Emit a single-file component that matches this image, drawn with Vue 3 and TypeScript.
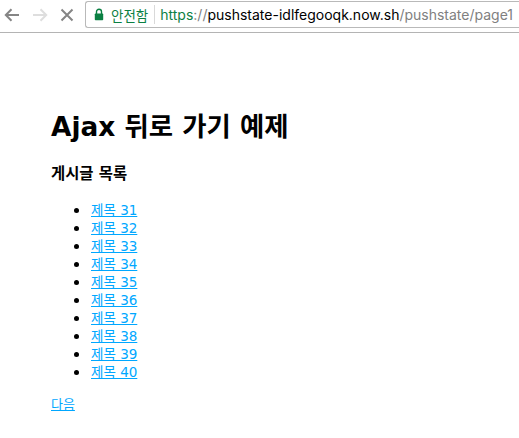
<script setup lang="ts">
const items: number[] = [31, 32, 33, 34, 35, 36, 37, 38, 39, 40]
</script>

<template>
  <div class="page">
    <header class="toolbar">
      <svg class="nav back" width="18" height="16" viewBox="0 0 18 16"><path d="M16 8H3M8.500 2.200 2.800 8l5.700 5.800" fill="none" stroke="#858585" stroke-width="2"/></svg>
      <svg class="nav forward" width="18" height="16" viewBox="0 0 18 16"><path d="M2 8h13M9.500 2.200 15.200 8l-5.700 5.800" fill="none" stroke="#dedede" stroke-width="2"/></svg>
      <svg class="nav stop" width="14" height="14" viewBox="0 0 14 14"><path d="M1.500 1.500l11 11M12.500 1.500l-11 11" fill="none" stroke="#858585" stroke-width="2"/></svg>
      <div class="omnibox">
        <svg class="lock" width="10" height="13" viewBox="0 0 10 13"><path d="M2.500 6V3.800a2.500 2.500 0 0 1 5 0V6" fill="none" stroke="#0b8043" stroke-width="1.400"/><rect x="0.800" y="5.400" width="8.400" height="6.800" rx="0.800" fill="#0b8043"/></svg>
        <span class="secure">안전함</span>
        <span class="divider"></span>
        <span class="url"><span class="scheme">https</span><span class="slashes">://</span><span class="host">pushstate-idlfegooqk.now.sh</span><span class="path">/pushstate/page1</span></span>
      </div>
    </header>
    <main class="content">
      <h1>Ajax 뒤로 가기 예제</h1>
      <h4>게시글 목록</h4>
      <ul>
        <li v-for="n in items" :key="n"><a href="#">제목 {{ n }}</a></li>
      </ul>
      <a class="next" href="#">다음</a>
    </main>
  </div>
</template>

<style>
html, body { margin: 0; background: #fff; }
</style>

<style scoped>
.page { width: 519px; height: 438px; overflow: hidden; background: #fff; font-family: "DejaVu Sans", "Noto Sans CJK KR", sans-serif; }
.toolbar { height: 33px; box-sizing: border-box; border-bottom: 1px solid #b4b4b4; background: #fff; display: flex; align-items: center; padding: 1px 0 4px 3px; }
.nav { flex: none; }
.forward { margin-left: 10px; }
.stop { margin-left: 11px; }
.omnibox { margin-left: 11px; flex: 1; height: 27px; box-sizing: border-box; border: 1px solid #b9b9b9; border-right: 0; border-radius: 3px 0 0 3px; display: flex; align-items: center; padding-left: 8px; white-space: nowrap; font-family: Inter, "Noto Sans CJK KR", sans-serif; }
.lock { flex: none; }
.secure { margin-left: 7px; font-size: 13.500px; color: #0b8043; font-family: "Noto Sans CJK KR", sans-serif; }
.divider { width: 1px; height: 19px; background: #d9d9d9; margin: 0 5px 0 6px; }
.url { font-size: 14px; color: #000; }
.scheme { color: #0b8043; }
.slashes, .path { color: #808080; }
.content { padding: 0 0 0 51px; }
h1 { margin: 0; padding-top: 75px; font-size: 26.400px; line-height: 37px; font-weight: 700; color: #000; }
h4 { margin: 19px 0 0; font-size: 15.400px; line-height: 20px; font-weight: 700; color: #000; }
ul { margin: 16px 0 0; padding: 0 0 0 40px; }
li { font-size: 13.500px; line-height: 18px; height: 18px; }
li::marker { font-size: 17px; }
a { color: #00a7ff; text-decoration: underline; }
.next { display: inline-block; margin-top: 16px; font-size: 13px; line-height: 18px; }
</style>
